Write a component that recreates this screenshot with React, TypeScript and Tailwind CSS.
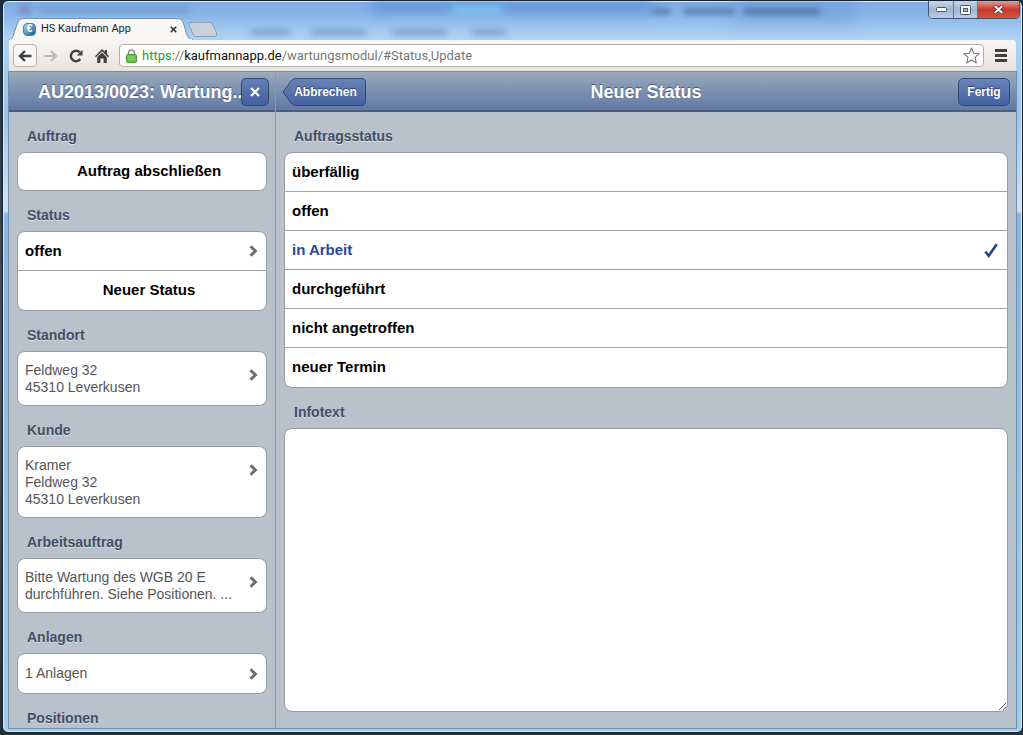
import React, { useState } from 'react';
import clsx from 'clsx';

const statusOptions = ['überfällig', 'offen', 'in Arbeit', 'durchgeführt', 'nicht angetroffen', 'neuer Termin'];

const Chevron: React.FC = () => (
  <svg className="w-[9px] h-3 shrink-0" viewBox="0 0 9 12" fill="none" stroke="#6f6f6f" strokeWidth="3">
    <path d="M1.5 1.2 6.4 6 1.5 10.8" />
  </svg>
);

const SectionTitle: React.FC<{ children: React.ReactNode }> = ({ children }) => (
  <h2 className="h-10 shrink-0 pl-[10px] pt-[14px] text-[14px] leading-5 font-bold text-[#434e68] [text-shadow:0_1px_0_rgba(255,255,255,0.45)]">
    {children}
  </h2>
);

const Card: React.FC<{ children: React.ReactNode }> = ({ children }) => (
  <div className="shrink-0 overflow-hidden rounded-lg border border-[#9a9ca3] bg-white divide-y divide-[#a3a3a3]">
    {children}
  </div>
);

const InfoRow: React.FC<{ lines: string[] }> = ({ lines }) => (
  <button type="button" className="flex w-full items-start justify-between pl-[7px] pr-2 pt-[10px] pb-[9px] text-left">
    <span className="text-[14px] leading-[17px] text-[#555]">
      {lines.map((line) => (
        <span key={line} className="block">{line}</span>
      ))}
    </span>
    <span className="pt-[7px]">
      <Chevron />
    </span>
  </button>
);

const TitleBar: React.FC = () => (
  <div className="relative flex h-[39px] shrink-0 items-end justify-between">
    {/* window content shining through the glass */}
    <div aria-hidden="true" className="pointer-events-none absolute inset-0 overflow-hidden">
      <div className="absolute left-[36%] top-0 h-3 w-[28%] bg-[#4f86cf]/60 blur-[6px]" />
      <div className="absolute left-[44%] top-1 h-3 w-[5%] bg-[#7fc1ee] blur-[5px]" />
      <div className="absolute left-[72%] top-0 h-5 w-[12%] bg-[#6b9bd6]/60 blur-[8px]" />
      <div className="absolute left-[1%] top-[5px] h-2 w-3 bg-[#7c6ea8]/60 blur-[3px]" />
      <div className="absolute left-[3%] top-[7px] h-1 w-[15%] bg-[#47689a]/40 blur-[3px]" />
      <div className="absolute left-[24%] top-[29px] h-[5px] w-[40px] bg-[#3f6a9c]/50 blur-[3px]" />
      <div className="absolute left-[30%] top-[29px] h-[5px] w-[55px] bg-[#3f6a9c]/50 blur-[3px]" />
      <div className="absolute left-[38%] top-[29px] h-[5px] w-[55px] bg-[#3f6a9c]/50 blur-[3px]" />
      <div className="absolute left-[46%] top-[29px] h-[5px] w-[34px] bg-[#3f6a9c]/50 blur-[3px]" />
      <div className="absolute left-[64%] top-[8px] h-[5px] w-[17px] bg-[#27476f]/60 blur-[3px]" />
      <div className="absolute left-[67%] top-[8px] h-[5px] w-[50px] bg-[#27476f]/60 blur-[3px]" />
      <div className="absolute left-[73%] top-[8px] h-[5px] w-[76px] bg-[#27476f]/60 blur-[3px]" />
    </div>

    <div className="relative flex items-end">
      <div className="relative flex h-[22px] w-[184px] items-center pl-[14px] pr-[14px]">
        <svg className="absolute inset-0 h-full w-full" viewBox="0 0 184 22" preserveAspectRatio="none">
          <path d="M0 22C4 21 4 18 6 12L9 4Q10 .5 14 .5H169Q173 .5 174 4L178 17Q180 22 184 22Z" fill="#f8f7f5" stroke="#7591b2" strokeWidth="1" />
          <path d="M1 22H183" stroke="#f8f7f5" strokeWidth="2" />
        </svg>
        <span className="relative flex h-[13px] w-[13px] shrink-0 items-center justify-center rounded-sm border border-[#3f88a8] bg-linear-to-br from-[#a9d8e8] to-[#136090] text-[10px] font-bold leading-none text-white">
          €
        </span>
        <span className="relative ml-[5px] flex-1 whitespace-nowrap font-[Roboto,'Open_Sans',sans-serif] text-[11px] leading-4 text-[#222]">HS Kaufmann App</span>
        <button type="button" aria-label="Tab schließen" className="relative flex h-4 w-3 items-center justify-center">
          <svg className="h-[7px] w-[7px]" viewBox="0 0 7 7" stroke="#333" strokeWidth="1.6">
            <path d="M.7.7l5.6 5.6M6.3.7.7 6.3" />
          </svg>
        </button>
      </div>
      <button type="button" aria-label="Neuer Tab" className="-ml-[5px] mb-[3px]">
        <svg className="h-[15px] w-[30px]" viewBox="0 0 30 15">
          <path d="M3 .5H22Q24 .5 25 3L28.500 11Q29.500 14.500 27 14.500H8Q6 14.500 5 12L1 3Q0 .5 3 .5Z" fill="#c9d2da" stroke="#869db5" />
        </svg>
      </button>
    </div>

    <div className="relative -mr-1 flex h-[18px] w-[92px] self-start overflow-hidden rounded-b-[5px] border border-t-0 border-[#45556b]">
      <button type="button" aria-label="Minimieren" className="flex w-[25px] items-center justify-center border-r border-[#5f7690] bg-linear-to-b from-[#c4d7eb] via-[#9fb7d2] to-[#b6cee8]">
        <svg className="h-[5px] w-[11px]" viewBox="0 0 11 5">
          <rect x=".5" y=".5" width="10" height="4" rx="1" fill="#fff" stroke="#4a5870" />
        </svg>
      </button>
      <button type="button" aria-label="Maximieren" className="flex w-6 items-center justify-center border-r border-[#5f7690] bg-linear-to-b from-[#c4d7eb] via-[#9fb7d2] to-[#b6cee8]">
        <svg className="h-[10px] w-[11px]" viewBox="0 0 11 10">
          <rect x=".5" y=".5" width="10" height="9" rx="1" fill="#fff" stroke="#4a5870" />
          <rect x="3.500" y="3.500" width="4" height="3" fill="#a9bfd8" stroke="#4a5870" />
        </svg>
      </button>
      <button type="button" aria-label="Schließen" className="flex flex-1 items-center justify-center bg-linear-to-b from-[#e29a90] via-[#c8382c] to-[#d2553c]">
        <svg className="h-[9px] w-[11px]" viewBox="0 0 11 9" strokeLinecap="square">
          <path d="M2.500 1.800 8.500 7.200M8.500 1.800 2.500 7.200" stroke="#5d3a46" strokeWidth="3.600" />
          <path d="M2.500 1.800 8.500 7.200M8.500 1.800 2.500 7.200" stroke="#fff" strokeWidth="2" />
        </svg>
      </button>
    </div>
  </div>
);

const Toolbar: React.FC = () => (
  <div className="flex h-8 shrink-0 items-center rounded-tr border-b border-[#cfc8c0] bg-linear-to-b from-[#f8f7f5] to-[#e9e3dd] pl-1 pr-[9px]">
    <button type="button" aria-label="Zurück" className="flex h-[23px] w-6 items-center justify-center rounded-sm border border-[#b5b1ac] bg-[#f8f7f6]">
      <svg className="h-3 w-[14px]" viewBox="0 0 14 12" fill="none" stroke="#404040" strokeWidth="2.400">
        <path d="M13.500 6H2M7 1 2 6l5 5" />
      </svg>
    </button>
    <button type="button" aria-label="Vorwärts" className="ml-[6px] flex h-6 w-4 items-center justify-center">
      <svg className="h-3 w-[14px]" viewBox="0 0 14 12" fill="none" stroke="#bcb9b6" strokeWidth="2.200">
        <path d="M.5 6H12M7 1l5 5-5 5" />
      </svg>
    </button>
    <button type="button" aria-label="Neu laden" className="ml-[9px] flex h-6 w-4 items-center justify-center">
      <svg className="h-[14px] w-[14px]" viewBox="0 0 14 14" fill="none">
        <path d="M11.300 10A5.200 5.200 0 1 1 10.800 3.400" stroke="#404040" strokeWidth="2.400" />
        <path d="M13.500.8V6.500H7.800Z" fill="#404040" />
      </svg>
    </button>
    <button type="button" aria-label="Startseite" className="ml-[10px] flex h-6 w-4 items-center justify-center">
      <svg className="h-[14px] w-[14px]" viewBox="0 0 14 14" fill="#404040">
        <path d="M7 0 9.800 2.800V1h2.200v4l2 2.200-1 1L7 2.300 1 8.200l-1-1Z" />
        <path d="M2.200 8.300 7 3.600l4.800 4.700V14H8.600V9.500H5.400V14H2.200Z" />
      </svg>
    </button>
    <div className="ml-[9px] flex h-[23px] min-w-0 flex-1 items-center rounded-sm border border-[#b3b0ac] bg-white pl-[6px] pr-[3px]">
      <svg className="h-[14px] w-[11px] shrink-0" viewBox="0 0 11 14">
        <path d="M2.500 7V4a3 3 0 0 1 6 0v3" fill="none" stroke="#8f9a8c" strokeWidth="1.600" />
        <rect x=".5" y="5.500" width="10" height="8" rx="1" fill="#6cc04a" stroke="#4c9a34" />
        <path d="M2 8h7M2 10.500h7" stroke="#93d878" />
      </svg>
      <div
        role="textbox"
        aria-label="Adresse"
        contentEditable
        suppressContentEditableWarning
        spellCheck={false}
        className="ml-[5px] min-w-0 flex-1 overflow-hidden whitespace-nowrap font-[Roboto,'Open_Sans',sans-serif] text-[13px] leading-5 text-[#777] outline-none"
      >
        <span className="text-[#2f9e2f]">https</span>://<span className="text-[#111]">kaufmannapp.de</span>/wartungsmodul/#Status,Update
      </div>
      <button type="button" aria-label="Lesezeichen hinzufügen">
        <svg className="block h-[17px] w-[17px]" viewBox="0 0 17 17" fill="#fff" stroke="#777" strokeWidth="1.100" strokeLinejoin="round">
          <path d="M8.500 1l2.200 5.200 5.500.5-4.200 3.700 1.300 5.600-4.800-3-4.800 3L5 10.400.8 6.700l5.500-.5Z" />
        </svg>
      </button>
    </div>
    <button type="button" aria-label="Menü" className="ml-[11px] flex w-3 flex-col gap-[2px]">
      <span className="h-[3px] w-full bg-[#404040]" />
      <span className="h-[3px] w-full bg-[#404040]" />
      <span className="h-[3px] w-full bg-[#404040]" />
    </button>
  </div>
);

const Sidebar: React.FC = () => (
  <aside className="flex w-[267px] shrink-0 flex-col overflow-hidden border-r border-[#8f99a6]">
    <header className="flex h-10 shrink-0 items-center border-b-2 border-[#4b5b79] bg-linear-to-b from-[#9babbc] via-[#7c90b0] to-[#627aa5] pt-[2px] pl-[29px] pr-[6px]">
      <h1 className="min-w-0 flex-1 overflow-hidden whitespace-nowrap text-[18px] leading-6 font-bold text-white [text-shadow:0_-1px_1px_rgba(30,45,80,0.6)]">
        AU2013/0023: Wartung..
      </h1>
      <button type="button" aria-label="Auftrag schließen" className="flex h-7 w-7 shrink-0 items-center justify-center rounded-[5px] border border-[#36486c] bg-linear-to-b from-[#6580b4] to-[#4361a0]">
        <svg className="h-[10px] w-[10px]" viewBox="0 0 10 10" stroke="#fff" strokeWidth="2">
          <path d="M1 1l8 8M9 1 1 9" />
        </svg>
      </button>
    </header>
    <div className="flex min-h-0 flex-1 flex-col overflow-hidden px-2">
      <SectionTitle>Auftrag</SectionTitle>
      <Card>
        <button type="button" className="block h-[37px] w-full pl-[14px] text-center text-[15px] font-bold text-black">Auftrag abschließen</button>
      </Card>
      <SectionTitle>Status</SectionTitle>
      <Card>
        <button type="button" className="flex h-[39px] w-full items-center justify-between pl-[7px] pr-2 text-[15px] font-bold text-black">
          offen
          <Chevron />
        </button>
        <button type="button" className="block h-[39px] w-full pl-[14px] text-center text-[15px] font-bold text-black">Neuer Status</button>
      </Card>
      <SectionTitle>Standort</SectionTitle>
      <Card>
        <InfoRow lines={['Feldweg 32', '45310 Leverkusen']} />
      </Card>
      <SectionTitle>Kunde</SectionTitle>
      <Card>
        <InfoRow lines={['Kramer', 'Feldweg 32', '45310 Leverkusen']} />
      </Card>
      <SectionTitle>Arbeitsauftrag</SectionTitle>
      <Card>
        <InfoRow lines={['Bitte Wartung des WGB 20 E', 'durchführen. Siehe Positionen. ...']} />
      </Card>
      <SectionTitle>Anlagen</SectionTitle>
      <Card>
        <button type="button" className="flex h-[39px] w-full items-center justify-between pl-[7px] pr-2 text-[14px] text-[#555]">
          1 Anlagen
          <Chevron />
        </button>
      </Card>
      <SectionTitle>Positionen</SectionTitle>
    </div>
  </aside>
);

const StatusForm: React.FC = () => {
  const [status, setStatus] = useState('in Arbeit');
  const [infotext, setInfotext] = useState('');

  return (
    <main className="flex min-w-0 flex-1 flex-col">
      <header className="flex h-10 shrink-0 items-center justify-between border-b-2 border-[#4b5b79] bg-linear-to-b from-[#9babbc] via-[#7c90b0] to-[#627aa5] pt-[2px] px-[6px]">
        <div className="flex flex-1">
          <button type="button" className="relative h-7 w-[84px] pl-[3px] text-center text-[12px] font-bold text-white [text-shadow:0_-1px_1px_rgba(20,35,70,0.7)]">
            <svg className="absolute inset-0 h-full w-full" viewBox="0 0 84 28">
              <defs>
                <linearGradient id="backFill" x1="0" y1="0" x2="0" y2="1">
                  <stop offset="0" stopColor="#6984b6" />
                  <stop offset="1" stopColor="#4361a0" />
                </linearGradient>
              </defs>
              <path d="M1 14 9 3Q11 .5 14 .5H79Q83.500 .5 83.500 5V23Q83.500 27.500 79 27.500H14Q11 27.500 9 25Z" fill="url(#backFill)" stroke="#36486c" />
            </svg>
            <span className="relative">Abbrechen</span>
          </button>
        </div>
        <h1 className="text-[18px] leading-6 font-bold text-white [text-shadow:0_-1px_1px_rgba(30,45,80,0.6)]">Neuer Status</h1>
        <div className="flex flex-1 justify-end">
          <button type="button" className="h-7 w-[52px] rounded-[5px] border border-[#36486c] bg-linear-to-b from-[#6984b6] to-[#4361a0] text-[12px] font-bold text-white [text-shadow:0_-1px_1px_rgba(20,35,70,0.7)]">
            Fertig
          </button>
        </div>
      </header>

      <div className="flex min-h-0 flex-1 flex-col px-2 pb-4">
        <SectionTitle>Auftragsstatus</SectionTitle>
        <Card>
          {statusOptions.map((option) => (
            <label
              key={option}
              className={clsx(
                'flex h-[39px] cursor-pointer items-center pl-[7px] pr-[9px] text-[15px] font-bold',
                status === option ? 'text-[#2b4796]' : 'text-black'
              )}
            >
              <input
                type="radio"
                name="status"
                value={option}
                checked={status === option}
                onChange={() => setStatus(option)}
                className="h-0 w-0 appearance-none"
              />
              <span className="flex-1">{option}</span>
              {status === option && (
                <svg className="h-[15px] w-[14px]" viewBox="0 0 14 15" fill="none" stroke="#2a4484" strokeWidth="2.600">
                  <path d="M1.300 8.500 4.700 12.800 12.800 1.200" />
                </svg>
              )}
            </label>
          ))}
        </Card>
        <label htmlFor="infotext" className="block shrink-0">
          <SectionTitle>Infotext</SectionTitle>
        </label>
        <textarea
          id="infotext"
          value={infotext}
          onChange={(e) => setInfotext(e.target.value)}
          className="block min-h-0 w-full flex-1 resize rounded-lg border border-[#9a9ca3] bg-white p-2 text-[15px] outline-none"
        />
      </div>
    </main>
  );
};

export default function App() {
  return (
    <div className="h-screen bg-linear-to-b from-[#1c2c40] via-[#48535f] to-[#26323a] pl-[2px] pb-[2px] font-['Liberation_Sans',Arial,sans-serif]">
      <div className="flex h-full flex-col overflow-hidden rounded-md border border-[#14212f] bg-[linear-gradient(180deg,#7fabe2_0,#86b4e8_12px,#acd2f4_36px,#9fc3e6_110px,#d3e4f3_210px,#8cb5e2_213px,#93b9dd_330px,#a4cdea_100%)] px-[6px] pb-1 shadow-[inset_0_0_0_1px_#d8eefa]">
        <TitleBar />
        <Toolbar />
        <div className="flex min-h-0 flex-1 bg-[#b9c2cb] shadow-[0_0_0_1px_#6f8dad]">
          <Sidebar />
          <StatusForm />
        </div>
      </div>
    </div>
  );
}
